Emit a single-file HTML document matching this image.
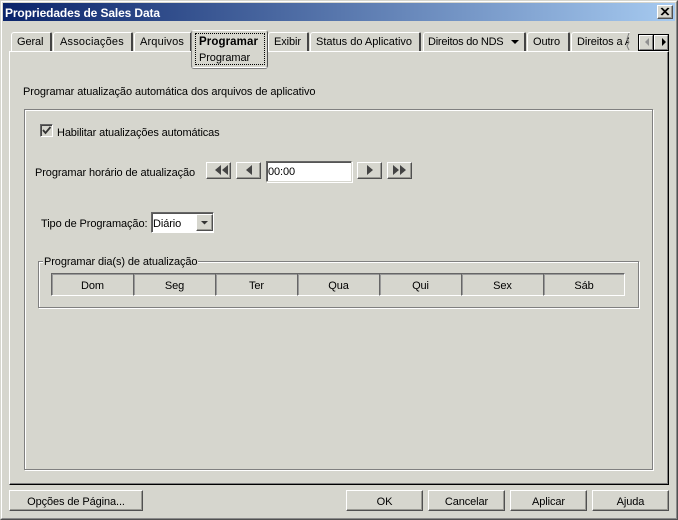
<!DOCTYPE html>
<html><head><meta charset="utf-8">
<style>
html,body{margin:0;padding:0;background:#d6d6ce}
#w{position:relative;width:678px;height:520px;overflow:hidden;background:#d6d6ce;font:11px/13px "Liberation Sans",sans-serif;letter-spacing:-.1px;color:#000}
#w div,#w span.t{position:absolute;box-sizing:border-box;white-space:nowrap}
.t{position:absolute;white-space:nowrap}
.btn{background:#d6d6ce;border:1px solid;border-color:#fff #505050 #505050 #fff;box-shadow:inset -1px -1px 0 #9a9a94}
.lbl{text-align:center}
.tab{top:32px;height:19px;border-top:1px solid #fff;border-left:1px solid #fff;border-right:2px solid #444;border-top-left-radius:3px;border-top-right-radius:2px;background:#d6d6ce}
.day{top:273px;height:23px;width:83px;border:1px solid;border-color:#666 #fff #fff #666;box-shadow:inset 1px 1px 0 #999;text-align:center;line-height:24px}
</style></head><body>
<div id="w">
<!-- window frame -->
<div style="left:0;top:0;width:678px;height:520px;border:1px solid;border-color:#d6d6ce #505050 #505050 #d6d6ce"></div>
<div style="left:1px;top:1px;width:676px;height:518px;border:1px solid;border-color:#fff #8a8a8a #8a8a8a #fff"></div>
<!-- title -->
<div style="left:3px;top:3px;width:672px;height:18px;background:linear-gradient(90deg,#0a246a,#a6caf0)"></div>
<span class="t" style="left:5px;top:6px;color:#fff;font-weight:bold;font-size:12px;line-height:14px;letter-spacing:-.12px">Propriedades de Sales Data</span>
<div class="btn" style="left:657px;top:5px;width:16px;height:14px"></div>
<svg style="position:absolute;left:657px;top:5px" width="16" height="14"><path d="M4 3l7 7M5 3l7 7M11 3l-7 7M12 3l-7 7" stroke="#000" stroke-width="1" fill="none"/></svg>

<!-- tab pane -->
<div style="left:9px;top:51px;width:660px;height:434px;border:1px solid;border-color:#fff #000 #000 #fff;box-shadow:inset -1px -1px 0 #808080"></div>

<!-- tabs -->
<div class="tab" style="left:11px;width:41px"></div><span class="t" style="left:17px;top:36px">Geral</span>
<div class="tab" style="left:53px;width:80px"></div><span class="t" style="left:60px;top:36px;letter-spacing:.2px">Associações</span>
<div class="tab" style="left:134px;width:58px"></div><span class="t" style="left:140px;top:36px;letter-spacing:.15px">Arquivos</span>
<div class="tab" style="left:268px;width:41px"></div><span class="t" style="left:274px;top:36px">Exibir</span>
<div class="tab" style="left:310px;width:111px"></div><span class="t" style="left:316px;top:36px;letter-spacing:0">Status do Aplicativo</span>
<div class="tab" style="left:423px;width:103px"></div><span class="t" style="left:428px;top:36px;letter-spacing:-.23px">Direitos do NDS</span>
<svg style="position:absolute;left:510px;top:39px" width="10" height="6"><path d="M1 1h8l-4 4z" fill="#000"/></svg>
<div class="tab" style="left:527px;width:43px"></div><span class="t" style="left:533px;top:36px">Outro</span>
<div style="left:571px;top:32px;width:59px;height:19px;border-top:1px solid #fff;border-left:1px solid #fff;border-top-left-radius:3px;overflow:hidden"><span class="t" style="left:5px;top:3px">Direitos a A</span></div>
<div style="left:629px;top:33px;width:9px;height:18px;background:#d6d6ce"></div>
<svg style="position:absolute;left:626px;top:33px" width="6" height="18"><path d="M3 0L1 6L3 9L1 13L3 17" stroke="#808080" fill="none"/></svg>

<!-- active tab -->
<div style="left:191px;top:30px;width:77px;height:38px;background:#d6d6ce;border:1px solid;border-color:#fff #505050 #fff #808080;border-radius:3px;box-shadow:0 1px 0 #808080"></div>
<div style="left:195px;top:33px;width:70px;height:32px;border:1px dotted #000"></div>
<span class="t" style="left:199px;top:36px;font-weight:bold;font-size:11.5px;letter-spacing:.1px">Programar</span>
<span class="t" style="left:199px;top:52px">Programar</span>

<!-- arrows -->
<div style="left:638px;top:34px;width:31px;height:17px;background:#000"></div>
<div style="left:639px;top:35px;width:14px;height:15px;background:#d6d6ce;border:1px solid;border-color:#fff #808080 #808080 #fff"></div>
<div style="left:654px;top:35px;width:14px;height:15px;background:#d6d6ce;border:1px solid;border-color:#fff #808080 #808080 #fff"></div>
<svg style="position:absolute;left:639px;top:35px" width="30" height="15"><path d="M10 3v8l-4-4z" fill="#909090"/><path d="M23 3v8l4-4z" fill="#000"/></svg>

<span class="t" style="left:23px;top:86px;letter-spacing:-.08px">Programar atualização automática dos arquivos de aplicativo</span>

<!-- inner panel -->
<div style="left:24px;top:109px;width:629px;height:361px;border:1px solid #808080;box-shadow:1px 1px 0 #fff,inset 1px 1px 0 #fff"></div>

<!-- checkbox -->
<div style="left:40px;top:124px;width:13px;height:13px;background:#d6d6ce;border:1px solid;border-color:#666 #fff #fff #666;box-shadow:inset 1px 1px 0 #444"></div>
<svg style="position:absolute;left:40px;top:124px" width="13" height="13"><path d="M3 6l2.500 3l5-6" stroke="#333" stroke-width="1.800" fill="none"/></svg>
<span class="t" style="left:57px;top:127px;letter-spacing:-.13px">Habilitar atualizações automáticas</span>

<span class="t" style="left:35px;top:167px">Programar horário de atualização</span>
<div class="btn" style="left:206px;top:162px;width:25px;height:17px"></div>
<div class="btn" style="left:236px;top:162px;width:25px;height:17px"></div>
<div class="btn" style="left:357px;top:162px;width:25px;height:17px"></div>
<div class="btn" style="left:387px;top:162px;width:25px;height:17px"></div>
<svg style="position:absolute;left:206px;top:162px" width="206" height="17"><path d="M15 3v10l-6-5zM22 3v10l-6-5zM46 3v10l-6-5zM161 3v10l6-5zM187 3v10l6-5zM194 3v10l6-5z" fill="#444"/></svg>
<div style="left:266px;top:161px;width:86px;height:21px;background:#fff;border:1px solid;border-color:#666 #d6d6ce #d6d6ce #666;box-shadow:1px 1px 0 #fff,inset 1px 1px 0 #555"></div>
<span class="t" style="left:268px;top:166px">00:00</span>

<!-- combo -->
<span class="t" style="left:41px;top:218px">Tipo de Programação:</span>
<div style="left:151px;top:212px;width:63px;height:21px;background:#fff;border:1px solid;border-color:#666 #fff #fff #666;box-shadow:inset 1px 1px 0 #555"></div>
<span class="t" style="left:153px;top:218px">Diário</span>
<div class="btn" style="left:196px;top:214px;width:17px;height:17px"></div>
<svg style="position:absolute;left:196px;top:214px" width="17" height="17"><path d="M5 7h7l-3.500 3.500z" fill="#333"/></svg>

<!-- group -->
<div style="left:38px;top:261px;width:601px;height:47px;border:1px solid #808080;box-shadow:1px 1px 0 #fff,inset 1px 1px 0 #fff"></div>
<span class="t" style="left:43px;top:256px;background:#d6d6ce;padding:0 1px">Programar dia(s) de atualização</span>

<div class="day" style="left:51px">Dom</div>
<div class="day" style="left:133px">Seg</div>
<div class="day" style="left:215px">Ter</div>
<div class="day" style="left:297px">Qua</div>
<div class="day" style="left:379px">Qui</div>
<div class="day" style="left:461px">Sex</div>
<div class="day" style="left:543px;width:82px">Sáb</div>

<!-- footer buttons -->
<div class="btn lbl" style="left:9px;top:490px;width:134px;height:21px;line-height:22px">Opções de Página...</div>
<div class="btn lbl" style="left:346px;top:490px;width:77px;height:21px;line-height:22px">OK</div>
<div class="btn lbl" style="left:428px;top:490px;width:77px;height:21px;line-height:22px">Cancelar</div>
<div class="btn lbl" style="left:510px;top:490px;width:77px;height:21px;line-height:22px">Aplicar</div>
<div class="btn lbl" style="left:592px;top:490px;width:77px;height:21px;line-height:22px">Ajuda</div>
</div>
</body></html>
